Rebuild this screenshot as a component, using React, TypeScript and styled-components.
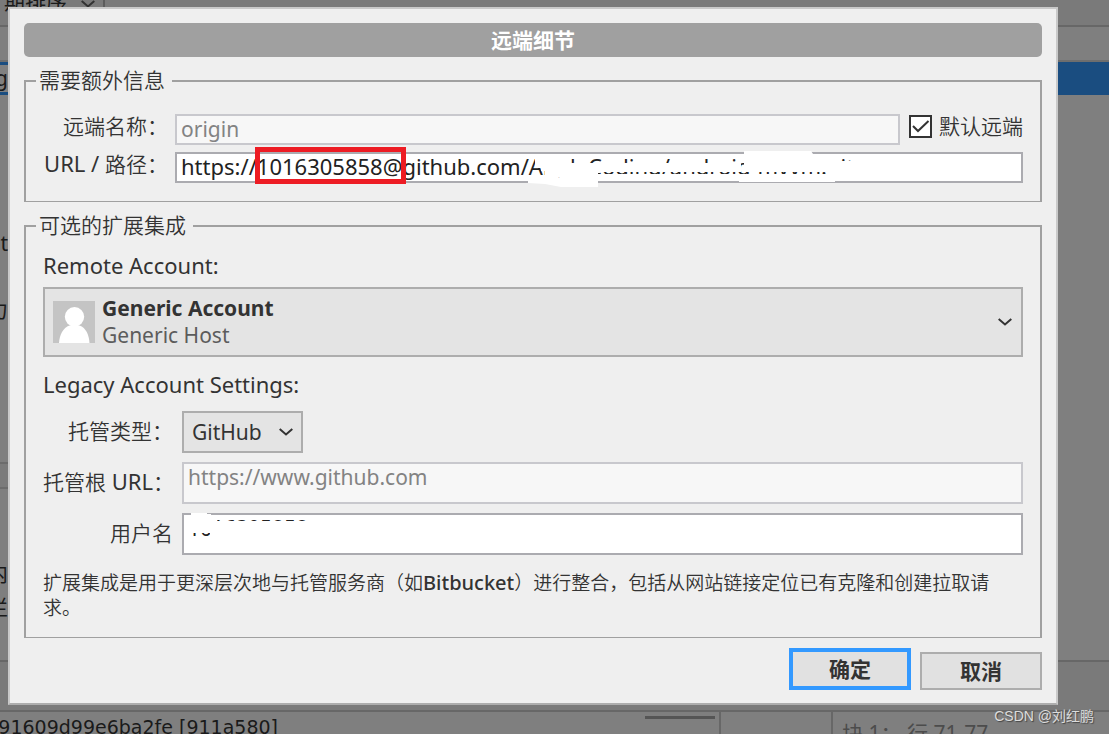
import React from "react";
import styled, { createGlobalStyle, css } from "styled-components";

const Global = createGlobalStyle`
  * { box-sizing: border-box; }
  body {
    margin: 0;
    background: #7f7f7f;
    color: #333;
    font: 21px/28px "Noto Sans", "Noto Sans CJK SC", sans-serif;
  }
  button, input, select { font: inherit; color: inherit; border-radius: 0; margin: 0; }
`;

const Screen = styled.div`
  position: relative;
  min-height: 100vh;
  overflow: hidden;
`;

/* ---------- dimmed application window ---------- */

const Backdrop = styled.div`
  position: absolute;
  inset: 0;
  display: flex;
  flex-direction: column;
  overflow: hidden;
  color: #1a1a1a;
`;

const Toolbar = styled.div`
  flex: none;
  height: 27px;
  background: #7a7a7a;
  border-bottom: 2px solid #676767;
`;

const SortMenu = styled.div`
  display: flex;
  align-items: flex-end;
  gap: 14px;
  width: 105px;
  height: 15px;
  padding-left: 4px;
  overflow: hidden;
  border-right: 2px solid #5c5c5c;
  svg { flex: none; margin-bottom: 7px; }
`;

const ColumnHeader = styled.div`
  flex: none;
  height: 35px;
  border-bottom: 2px solid #6e6e6e;
`;

const SelectedRow = styled.div`
  flex: none;
  display: flex;
  height: 33px;
  background: #1a4d80;
`;

const Sliver = styled.div`
  width: 8px;
  flex: none;
  display: flex;
  flex-direction: column;
`;

const SliverText = styled.div<{ $h: number; $top?: number }>`
  display: flex;
  justify-content: flex-end;
  height: ${(p) => p.$h}px;
  padding-top: ${(p) => p.$top ?? 0}px;
  overflow: hidden;
  white-space: nowrap;
`;

const EditedName = styled(SliverText)`
  margin: 3px 0;
  background: #808080;
  line-height: 26px;
`;

const Body = styled.div`
  flex: 1;
  min-height: 0;
  display: flex;
`;

const SliverBar = styled.div`
  height: 27px;
  background: #7b7b7b;
  border: solid #6c6c6c;
  border-width: 2px 0;
`;

const DetailBar = styled.div`
  flex: none;
  height: 52px;
  background: #7a7a7a;
  border: solid #676767;
  border-width: 2px 0;
`;

const Footer = styled.div`
  flex: none;
  display: grid;
  grid-template-columns: 721px 112px 1fr;
  height: 22px;
  overflow: hidden;
`;

const FooterCell = styled.div<{ $last?: boolean }>`
  display: flex;
  justify-content: space-between;
  overflow: hidden;
  white-space: nowrap;
  ${(p) => !p.$last && css`border-right: 2px solid #676767;`}
`;

const Commit = styled.span`
  display: flex;
  justify-content: flex-end;
  width: 278px;
  overflow: hidden;
  font: 19px/30px "DejaVu Sans", sans-serif;
`;

const ScrollThumb = styled.div`
  width: 70px;
  height: 3px;
  margin: 4px 4px 0;
  background: #555;
`;

const LineRange = styled.span`
  padding: 4px 0 0 9px;
  line-height: 34px;
  color: #4c4c4c;
`;

/* ---------- dialog ---------- */

const Stage = styled.div`
  position: relative;
  padding: 7px 51px 20px 8px;
`;

const Dialog = styled.form`
  padding: 14px 14px 13px;
  background: #efefef;
  border: 2px solid #c9c9c9;
  border-bottom: 2px solid #adadad;
`;

const Title = styled.h1`
  margin: 0 0 10px;
  border-radius: 5px;
  background: #a0a0a0;
  color: #fff;
  font-size: 21px;
  font-weight: 700;
  line-height: 34px;
  text-align: center;
`;

const Group = styled.fieldset<{ $bottom: number }>`
  margin: 0 0 10px;
  padding: 0 17px ${(p) => p.$bottom}px;
  border: 2px solid #a0a0a0;
  border-bottom-width: 1px;
  min-width: 0;
`;

const Legend = styled.legend`
  margin-left: -7px;
  padding: 0 7px 2px 3px;
  line-height: 26px;
  font-weight: 350;
`;

const Row = styled.div<{ $label: number; $gap: number; $top: number }>`
  display: grid;
  grid-template-columns: ${(p) => p.$label}px 1fr;
  column-gap: ${(p) => p.$gap}px;
  margin-top: ${(p) => p.$top}px;
`;

const Label = styled.label<{ $middle?: boolean }>`
  padding-bottom: 2px;
  line-height: 24px;
  text-align: right;
  white-space: nowrap;
  font-weight: 350;
  ${(p) => p.$middle && css`align-self: center;`}
`;

const Latin = styled.span`
  font-size: 22px;
  font-weight: 400;
  line-height: 1;
`;

const Field = styled.div`
  position: relative;
  display: flex;
  min-width: 0;
  gap: 9px;
`;

const TextBox = styled.input<{ $tall?: boolean }>`
  flex: 1;
  min-width: 0;
  height: ${(p) => (p.$tall ? 42 : 31)}px;
  padding: ${(p) => (p.$tall ? "0 4px 12px" : "0 4px 2px")};
  border: 2px solid #ababb0;
  background: #fff;
  color: #222;
  outline: none;
  &:disabled {
    border-color: #c8c8cd;
    background: #f7f7f7;
    color: #838383;
  }
`;

const UrlBox = styled(TextBox)`
  padding-bottom: 4px;
  font-size: 22px;
  line-height: 23px;
`;

const CheckLabel = styled.label`
  display: flex;
  gap: 7px;
  line-height: 24px;
  white-space: nowrap;
  font-weight: 350;
`;

const CheckBox = styled.span`
  display: grid;
  margin-top: 1px;
  width: 23px;
  height: 23px;
  > * { grid-area: 1 / 1; }
  input {
    appearance: none;
    width: 23px;
    height: 23px;
    border: 2px solid #333;
    background: #fff;
  }
  svg { pointer-events: none; z-index: 1; }
`;

const Highlight = styled.div`
  position: absolute;
  left: 80px;
  top: -5px;
  width: 151px;
  height: 37px;
  border: 5px solid #ed1c24;
  pointer-events: none;
`;

const Eraser = styled.svg`
  position: absolute;
  left: 0;
  top: -5px;
  pointer-events: none;
`;

const Heading = styled.div<{ $top: number }>`
  margin-top: ${(p) => p.$top}px;
  padding-bottom: 2px;
  font-size: 22px;
  line-height: 26px;
`;

const AccountButton = styled.button`
  display: flex;
  align-items: center;
  gap: 7px;
  width: 100%;
  height: 70px;
  margin-top: 7px;
  padding: 0 9px 0 8px;
  border: 2px solid #adadad;
  background: #e4e4e4;
  text-align: left;
  line-height: 27px;
`;

const AccountText = styled.span`
  flex: 1;
  display: flex;
  flex-direction: column;
  small { font-size: 21px; color: #5c5c5c; }
`;

const SelectWrap = styled.div`
  position: relative;
  width: 121px;
  svg {
    position: absolute;
    right: 10px;
    top: 17px;
    pointer-events: none;
  }
`;

const Select = styled.select`
  appearance: none;
  width: 100%;
  height: 42px;
  padding: 0 8px;
  border: 2px solid #adadad;
  background: #e4e4e4;
`;

const Note = styled.p`
  margin: 16px 0 0;
  padding-right: 24px;
  font-size: 19px;
  line-height: 25px;
  font-weight: 350;
`;

const Brand = styled.span`
  font-size: 20px;
  font-weight: 500;
  line-height: 1;
`;

const Actions = styled.div`
  display: flex;
  justify-content: flex-end;
  align-items: flex-end;
  gap: 9px;
`;

const Button = styled.button<{ $primary?: boolean }>`
  width: 122px;
  height: ${(p) => (p.$primary ? 42 : 38)}px;
  padding: 0;
  border: ${(p) => (p.$primary ? "4px solid #3399ff" : "2px solid #adadad")};
  background: #e1e1e1;
  font-weight: 700;
`;

const Watermark = styled.div`
  position: absolute;
  right: 15px;
  bottom: 7px;
  color: #dcdcdc;
  font: 14px/22px "Liberation Sans", "Noto Sans CJK SC", sans-serif;
  text-shadow: 1px 1px 1px #444;
`;

const Chevron = () => (
  <svg width="14" height="8" viewBox="0 0 14 8" fill="none" stroke="#333" strokeWidth="2" aria-hidden="true">
    <path d="M0.7 1L7 6.4L13.3 1" />
  </svg>
);

const Avatar = () => (
  <svg width="42" height="42" viewBox="0 0 42 42" aria-hidden="true">
    <rect width="42" height="42" fill="#c4c4c4" />
    <circle cx="21.5" cy="15.8" r="9.7" fill="#fff" />
    <path d="M6 42C6.500 34 10 27 16.500 24.600H26.500C33 27 36 34 36.500 42Z" fill="#fff" />
  </svg>
);

/* White paint strokes hiding most of the repository path. */
const UrlEraser = () => (
  <Eraser width="700" height="44" viewBox="0 0 700 44" fill="#fff" aria-hidden="true">
    <path d="M360 12H372V21H360Z" />
    <path d="M366 16H566V25H423V40H386L370 37L353 36V34H377V31H388V29H370V24H366Z" />
    <path d="M423 27H566V34H423Z" />
    <path d="M569 4H636L638 7H653V25H569Z" />
    <path d="M564 27H660V35H564Z" />
    <path d="M653 14H685V33H653Z" />
  </Eraser>
);

/* White paint strokes hiding most of the user name. */
const UserEraser = () => (
  <Eraser width="160" height="44" viewBox="0 0 160 44" fill="#fff" aria-hidden="true">
    <path d="M9 5H25V6H29V8H35V25H3V8H9Z" />
    <path d="M28 13H140V36H28Z" />
  </Eraser>
);

export default function App() {
  return (
    <Screen>
      <Global />
      <Backdrop>
        <Toolbar>
          <SortMenu>
            期排序
            <Chevron />
          </SortMenu>
        </Toolbar>
        <ColumnHeader />
        <SelectedRow>
          <Sliver>
            <EditedName $h={27}>g</EditedName>
          </Sliver>
        </SelectedRow>
        <Body>
          <Sliver>
            <SliverText $h={200} $top={134}>et</SliverText>
            <SliverText $h={167}>力</SliverText>
            <SliverBar />
            <SliverText $h={104} $top={70}>内</SliverText>
            <SliverText $h={40}>栏</SliverText>
          </Sliver>
        </Body>
        <DetailBar />
        <Footer>
          <FooterCell>
            <Commit>91609d99e6ba2fe [911a580]</Commit>
            <ScrollThumb />
          </FooterCell>
          <FooterCell />
          <FooterCell $last>
            <LineRange>块 1： 行 71-77</LineRange>
          </FooterCell>
        </Footer>
      </Backdrop>

      <Stage>
        <Dialog onSubmit={(e) => e.preventDefault()}>
          <Title>远端细节</Title>

          <Group $bottom={18}>
            <Legend>需要额外信息</Legend>
            <Row $label={125} $gap={7} $top={19}>
              <Label htmlFor="name">远端名称：</Label>
              <Field>
                <TextBox id="name" defaultValue="origin" disabled />
                <CheckLabel>
                  <CheckBox>
                    <input type="checkbox" defaultChecked />
                    <svg width="23" height="23" viewBox="0 0 23 23" fill="none" stroke="#333" strokeWidth="2">
                      <path d="M4 11L9 16L19.500 6" />
                    </svg>
                  </CheckBox>
                  默认远端
                </CheckLabel>
              </Field>
            </Row>
            <Row $label={125} $gap={7} $top={7}>
              <Label htmlFor="url"><Latin>URL / </Latin>路径：</Label>
              <Field>
                <UrlBox id="url" defaultValue="https://1016305858@github.com/AngleCoding/android-mvvm.git" />
                <UrlEraser />
                <Highlight />
              </Field>
            </Row>
          </Group>

          <Group $bottom={16}>
            <Legend>可选的扩展集成</Legend>
            <Heading $top={12}>Remote Account:</Heading>
            <AccountButton type="button">
              <Avatar />
              <AccountText>
                <b>Generic Account</b>
                <small>Generic Host</small>
              </AccountText>
              <Chevron />
            </AccountButton>
            <Heading $top={14}>Legacy Account Settings:</Heading>
            <Row $label={130} $gap={9} $top={12}>
              <Label htmlFor="host" $middle>托管类型：</Label>
              <SelectWrap>
                <Select id="host" defaultValue="GitHub">
                  <option>GitHub</option>
                </Select>
                <Chevron />
              </SelectWrap>
            </Row>
            <Row $label={130} $gap={9} $top={9}>
              <Label htmlFor="root" $middle>托管根<Latin> URL</Latin>：</Label>
              <Field>
                <TextBox id="root" $tall defaultValue="https://www.github.com" disabled />
              </Field>
            </Row>
            <Row $label={130} $gap={9} $top={9}>
              <Label htmlFor="user" $middle>用户名</Label>
              <Field>
                <TextBox id="user" $tall defaultValue="1016305858" />
                <UserEraser />
              </Field>
            </Row>
            <Note>
              扩展集成是用于更深层次地与托管服务商（如<Brand>Bitbucket</Brand>）进行整合，包括从网站链接定位已有克隆和创建拉取请求。
            </Note>
          </Group>

          <Actions>
            <Button $primary>确定</Button>
            <Button type="button">取消</Button>
          </Actions>
        </Dialog>
      </Stage>

      <Watermark>CSDN @刘红鹏</Watermark>
    </Screen>
  );
}
